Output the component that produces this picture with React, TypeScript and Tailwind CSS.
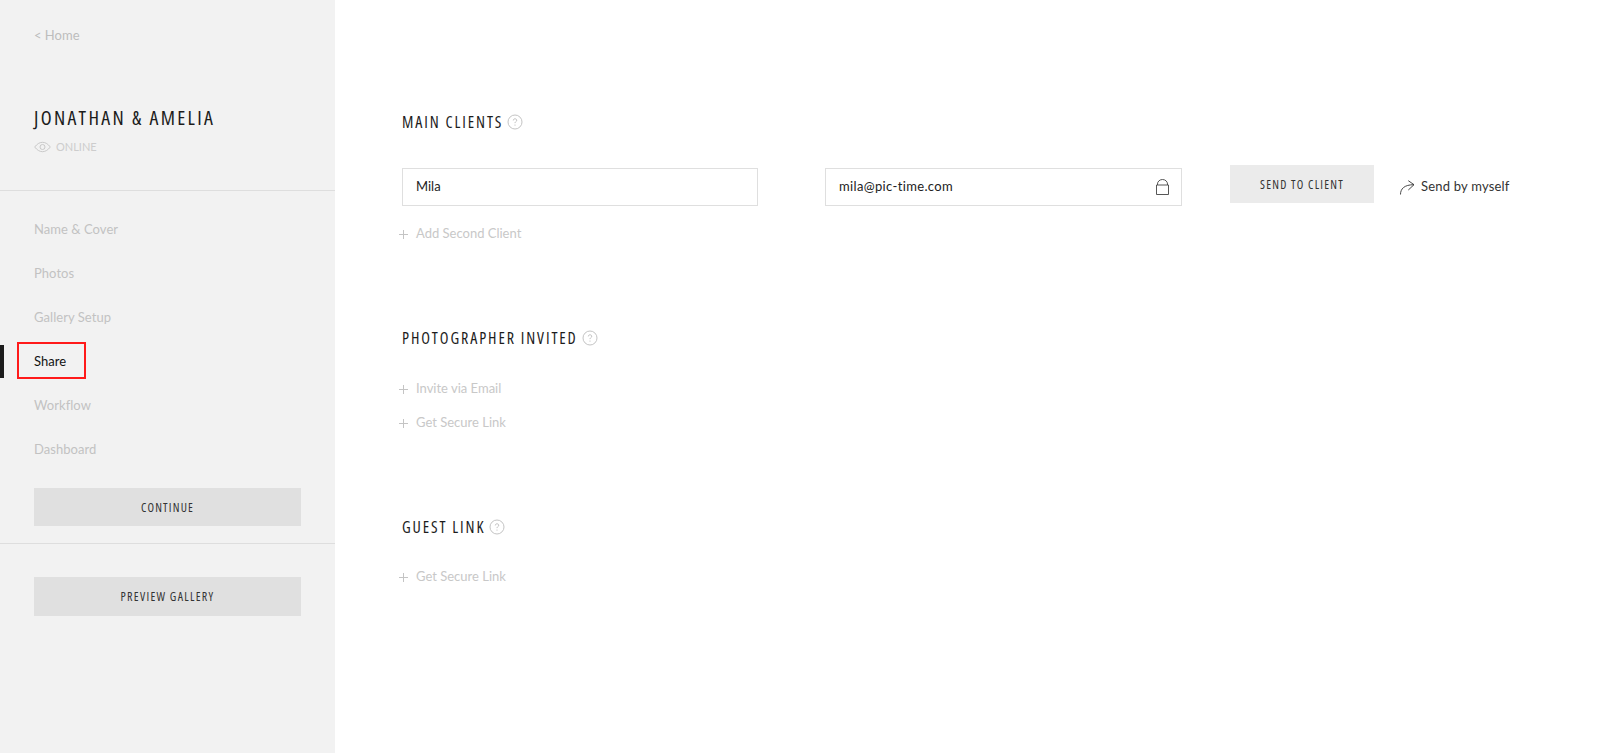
const NAV = ['Name & Cover', 'Photos', 'Gallery Setup', 'Share', 'Workflow', 'Dashboard']

const BODY = "font-['Lato','Open_Sans',sans-serif]"
const NARROW = "font-['Open_Sans',sans-serif] font-stretch-[75%]"

function Help() {
  return (
    <svg width="16" height="16" viewBox="0 0 16 16" fill="none" className="shrink-0">
      <circle cx="8" cy="8" r="7" stroke="#c4c4c4" />
      <path d="M6.3 6.4c0-1 .8-1.6 1.7-1.6s1.7.6 1.7 1.500c0 1.300-1.700 1.300-1.700 2.800" stroke="#b5b5b5" strokeWidth="0.9" />
      <circle cx="8" cy="11" r="0.6" fill="#b5b5b5" />
    </svg>
  )
}

function Heading({ children }: { children: string }) {
  return (
    <div className="flex items-center gap-[4px] h-5">
      <h2 className={`${NARROW} text-[16px] tracking-[1.9px] text-[#1c1c1c] leading-5`}>{children}</h2>
      <Help />
    </div>
  )
}

function AddLink({ children }: { children: string }) {
  return (
    <div className={`${BODY} flex items-center h-5 -ml-[3px] text-[13px] text-[#c8c8c8]`}>
      <svg width="9" height="9" viewBox="0 0 9 9" className="mr-2 shrink-0" stroke="#c4c4c4" strokeWidth="1">
        <path d="M4.500 0v9M0 4.500h9" />
      </svg>
      {children}
    </div>
  )
}

function Sidebar() {
  return (
    <aside className="w-[335px] min-h-[753px] shrink-0 bg-[#f2f2f2] flex flex-col">
      <div className={`${BODY} px-[34px] pt-[26px] h-[191px] border-b border-[#dedede]`}>
        <div className="text-[13px] leading-[18px] text-[#bdbdbd]">&lt; Home</div>
        <h1 className={`${NARROW} mt-[62px] text-[20px] leading-6 tracking-[2.3px] text-[#1c1c1c]`}>JONATHAN &amp; AMELIA</h1>
        <div className="mt-[9px] flex items-center gap-[5px] text-[11px] leading-4 text-[#cdcdcd]">
          <svg width="17" height="12" viewBox="0 0 17 12" fill="none" stroke="#c4c4c4" strokeWidth="0.9">
            <path d="M.7 6C3 3 5.600 1.300 8.500 1.300S14 3 16.300 6c-2.300 3-4.900 4.700-7.800 4.700S3 9 .7 6z" />
            <circle cx="8.500" cy="6" r="2.500" />
          </svg>
          ONLINE
        </div>
      </div>

      <nav className={`${BODY} pt-[17px] flex flex-col`}>
        {NAV.map((item) => (
          <div key={item} className="relative h-11 px-[34px] pb-px flex items-center text-[13px] tracking-[0.05px] text-[#c2c2c2]">
            {item === 'Share' ? (
              <>
                <span className="absolute left-0 top-[5px] w-1 h-[33px] bg-[#1c1c1c]" />
                <span className="absolute left-[17px] top-[2px] w-[69px] h-[37px] border-2 border-[#ff1a1a]" />
                <span className="text-[#111]">{item}</span>
              </>
            ) : (
              item
            )}
          </div>
        ))}
      </nav>

      <div className="px-[34px] pt-[16px] pb-[17px] border-b border-[#dedede]">
        <button className={`${NARROW} w-full h-[38px] pt-px bg-[#e0e0e0] text-[12px] tracking-[1.2px] text-[#333]`}>CONTINUE</button>
      </div>
      <div className="px-[34px] pt-[33px]">
        <button className={`${NARROW} w-full h-[39px] pt-px bg-[#e0e0e0] text-[12px] tracking-[1.3px] text-[#333]`}>PREVIEW GALLERY</button>
      </div>
    </aside>
  )
}

export default function App() {
  return (
    <div className="flex min-h-[753px] bg-white">
      <Sidebar />
      <main className={`${BODY} flex-1 pl-[67px] pt-[112px]`}>
        <Heading>MAIN CLIENTS</Heading>
        <div className="mt-[33px] flex items-start">
          <div className="mt-[3px] w-[356px] h-[38px] border border-[#dfdfdf] px-[13px] flex items-center text-[13px] text-[#222]">Mila</div>
          <div className="mt-[3px] ml-[67px] w-[357px] h-[38px] border border-[#dfdfdf] pl-[13px] pr-[12px] flex items-center justify-between text-[13px] tracking-[0.35px] text-[#222]">
            mila@pic-time.com
            <svg width="13" height="16" viewBox="0 0 13 16" fill="none" stroke="#444" strokeWidth="0.9">
              <path d="M.5 6h12v9.500H.5zM1.500 6V5a5 4.500 0 0 1 10 0v1" />
            </svg>
          </div>
          <button className={`${NARROW} ml-[48px] w-[144px] h-[38px] pt-px bg-[#ebebeb] text-[12px] tracking-[1.25px] text-[#333]`}>SEND TO CLIENT</button>
          <div className="ml-[26px] mt-[3px] h-[38px] flex items-center gap-[6px] text-[13px] tracking-[0.2px] text-[#333]">
            <svg width="15" height="15" viewBox="0 0 15 15" fill="none" stroke="#333" strokeWidth="0.9">
              <path d="M.5 14.500C.5 9 4 4.700 14 4.700M8.300.7 14 4.700 8.300 10" />
            </svg>
            Send by myself
          </div>
        </div>
        <div className="mt-[18px]">
          <AddLink>Add Second Client</AddLink>
        </div>

        <div className="mt-[84px]">
          <Heading>PHOTOGRAPHER INVITED</Heading>
        </div>
        <div className="mt-[31px] flex flex-col gap-[14px]">
          <AddLink>Invite via Email</AddLink>
          <AddLink>Get Secure Link</AddLink>
        </div>

        <div className="mt-[84px]">
          <Heading>GUEST LINK</Heading>
        </div>
        <div className="mt-[30px]">
          <AddLink>Get Secure Link</AddLink>
        </div>
      </main>
    </div>
  )
}
